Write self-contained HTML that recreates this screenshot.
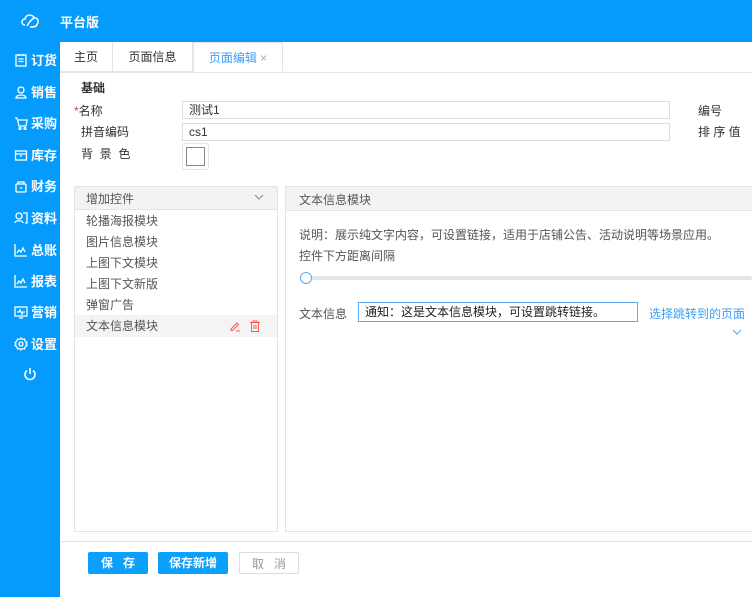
<!DOCTYPE html>
<html><head><meta charset="utf-8"><style>
*{margin:0;padding:0;box-sizing:border-box}
body{width:752px;height:597px;overflow:hidden;background:#fff;font-family:"Liberation Sans","Noto Sans CJK SC",sans-serif;font-size:12px;color:#333;position:relative}
.a{position:absolute;white-space:nowrap}
.top{left:0;top:0;width:752px;height:42px;background:#049bfd}
.side{left:0;top:42px;width:60px;height:555px;background:#049bfd}
.si{position:absolute;left:14px;color:#fff;font-size:13px;font-weight:bold;display:flex;align-items:center;gap:3px;white-space:nowrap}
.si svg{width:14px;height:14px}
.tab{top:42px;height:30px;line-height:30px;text-align:center;font-size:12px;border-right:1px solid #e4e4e4;border-bottom:1px solid #e4e4e4}
.inp{border:1px solid #ddd;height:18px;padding-left:6px;line-height:16px;font-size:12px}
.li{position:absolute;left:12px;font-size:12px;color:#555;white-space:nowrap}
.btn{top:552px;height:22px;line-height:22px;text-align:center;font-size:12px;border-radius:2px;font-weight:bold}
</style></head><body>
<div class="a top"></div>
<svg class="a" style="left:19px;top:11px" width="22" height="20" viewBox="0 0 22 20" fill="none" stroke="#fff" stroke-width="1.5"><path d="M6 14c-4 0-4-6 0-6 1-5 8-5 9-1 4-1 6 5 2 7"/><path d="M8 15c2-4 4-6 7-8"/><path d="M11 16c3 0 6 0 7-2"/></svg>
<div class="a" style="left:60px;top:12px;color:#fff;font-size:13px;font-weight:bold">平台版</div>
<div class="a side"></div>
<div class="si" style="top:50px"><svg viewBox="0 0 14 14" fill="none" stroke="#fff" stroke-width="1.3"><rect x="2" y="2" width="10" height="11"/><path d="M5 1v2M9 1v2M4.5 6h5M4.5 8.5h5"/></svg>订货</div>
<div class="si" style="top:82px"><svg viewBox="0 0 14 14" fill="none" stroke="#fff" stroke-width="1.3"><circle cx="7" cy="5" r="3"/><path d="M2 13c0-4 10-4 10 0z"/></svg>销售</div>
<div class="si" style="top:113px"><svg viewBox="0 0 14 14" fill="none" stroke="#fff" stroke-width="1.3"><path d="M1 2h2l2 8h7l1-6H4"/><circle cx="6" cy="12.5" r="1"/><circle cx="11" cy="12.5" r="1"/></svg>采购</div>
<div class="si" style="top:145px"><svg viewBox="0 0 14 14" fill="none" stroke="#fff" stroke-width="1.3"><rect x="1.5" y="3" width="11" height="9"/><path d="M1.5 6h11M6 8h2"/></svg>库存</div>
<div class="si" style="top:176px"><svg viewBox="0 0 14 14" fill="none" stroke="#fff" stroke-width="1.3"><rect x="2" y="5" width="10" height="8" rx="1"/><path d="M4 5V3h6v2M7 8v2"/></svg>财务</div>
<div class="si" style="top:208px"><svg viewBox="0 0 14 14" fill="none" stroke="#fff" stroke-width="1.3"><circle cx="5" cy="5" r="3"/><path d="M1 12c0-3 8-3 8 0M9 2h4v10h-2"/></svg>资料</div>
<div class="si" style="top:240px"><svg viewBox="0 0 14 14" fill="none" stroke="#fff" stroke-width="1.3"><path d="M1 1v12h12M3 10l2-3 2 2 2-4 2 4"/></svg>总账</div>
<div class="si" style="top:271px"><svg viewBox="0 0 14 14" fill="none" stroke="#fff" stroke-width="1.3"><path d="M1 1v12h12M3 10l2-3 2 2 2-4 2 4"/></svg>报表</div>
<div class="si" style="top:302px"><svg viewBox="0 0 14 14" fill="none" stroke="#fff" stroke-width="1.3"><rect x="1" y="2" width="12" height="9"/><path d="M3 7h2l1-2 2 4 1-2h2M5 13h4"/></svg>营销</div>
<div class="si" style="top:334px"><svg viewBox="0 0 14 14" fill="none" stroke="#fff" stroke-width="1.3"><circle cx="7" cy="7" r="2"/><path d="M7 1l1.5 1.5 2-.5.5 2L13 5.5 12 7l1 1.5-2 1.5-.5 2-2-.5L7 13l-1.5-1.5-2 .5-.5-2L1 8.5 2 7 1 5.5 3 4l.5-2 2 .5z"/></svg>设置</div>
<svg class="a" style="left:23px;top:367px" width="14" height="14" viewBox="0 0 14 14" fill="none" stroke="#fff" stroke-width="1.6"><path d="M4 3.5a5 5 0 1 0 6 0M7 1v6"/></svg>

<div class="a" style="left:60px;top:72px;width:692px;border-top:1px solid #e4e4e4"></div>
<div class="a tab" style="left:60px;width:53px">主页</div>
<div class="a tab" style="left:113px;width:80px">页面信息</div>
<div class="a tab" style="left:193px;width:90px;color:#3d9df5;border-bottom:1px solid #fff;border-left:1px solid #e4e4e4;border-top:1px solid #e4e4e4;">页面编辑 <span style="color:#aaa">×</span></div>

<div class="a" style="left:81px;top:79px;font-weight:bold">基础</div>
<div class="a" style="left:74px;top:102px"><span style="color:#e33">*</span>名称</div>
<div class="a" style="left:81px;top:123px">拼音编码</div>
<div class="a" style="left:81px;top:145px">背&nbsp;&nbsp;景&nbsp;&nbsp;色</div>
<div class="a inp" style="left:182px;top:101px;width:488px">测试1</div>
<div class="a inp" style="left:182px;top:123px;width:488px">cs1</div>
<div class="a" style="left:182px;top:143px;width:27px;height:27px;border:1px solid #e4e4e4;border-radius:3px;padding:3px"><div style="width:19px;height:19px;border:1px solid #888"></div></div>
<div class="a" style="left:698px;top:102px">编号</div>
<div class="a" style="left:698px;top:123px">排&nbsp;序&nbsp;值</div>

<div class="a" style="left:74px;top:186px;width:204px;height:346px;border:1px solid #e4e4e4"></div>
<div class="a" style="left:75px;top:187px;width:202px;height:23px;background:#f3f3f3;border-bottom:1px solid #e4e4e4"></div>
<div class="a" style="left:86px;top:190px;color:#555">增加控件</div>
<svg class="a" style="left:254px;top:194px" width="10" height="6" viewBox="0 0 10 6" fill="none" stroke="#888"><path d="M1 1l4 4 4-4"/></svg>
<div class="a" style="left:75px;top:315px;width:202px;height:22px;background:#f4f4f4"></div>
<div class="li" style="left:86px;top:212px">轮播海报模块</div>
<div class="li" style="left:86px;top:233px">图片信息模块</div>
<div class="li" style="left:86px;top:254px">上图下文模块</div>
<div class="li" style="left:86px;top:275px">上图下文新版</div>
<div class="li" style="left:86px;top:296px">弹窗广告</div>
<div class="li" style="left:86px;top:317px">文本信息模块</div>
<svg class="a" style="left:229px;top:320px" width="12" height="12" viewBox="0 0 12 12" fill="none" stroke="#f55"><path d="M2 9l6-6 1.5 1.5-6 6H2zM7 11h4"/></svg>
<svg class="a" style="left:249px;top:320px" width="12" height="12" viewBox="0 0 12 12" fill="none" stroke="#f55"><path d="M1 2.5h10M4 2.5V1h4v1.5M2.5 2.5v9h7v-9M5 5v4M7 5v4"/></svg>

<div class="a" style="left:285px;top:186px;width:470px;height:346px;border:1px solid #e4e4e4"></div>
<div class="a" style="left:286px;top:187px;width:466px;height:24px;background:#f3f3f3;border-bottom:1px solid #e4e4e4"></div>
<div class="a" style="left:299px;top:191px;color:#555">文本信息模块</div>
<div class="a" style="left:299px;top:226px;color:#555">说明：展示纯文字内容，可设置链接，适用于店铺公告、活动说明等场景应用。</div>
<div class="a" style="left:299px;top:247px;color:#555">控件下方距离间隔</div>
<div class="a" style="left:300px;top:276px;width:452px;height:4px;background:#e3e5ec;border-radius:2px"></div>
<div class="a" style="left:300px;top:272px;width:12px;height:12px;border:1.5px solid #5aa9f2;border-radius:50%;background:#fff"></div>
<div class="a" style="left:299px;top:305px;color:#555">文本信息</div>
<div class="a inp" style="left:358px;top:302px;width:280px;height:20px;border-color:#5aa9f2;color:#222;line-height:18px">通知：这是文本信息模块，可设置跳转链接。</div>
<div class="a" style="left:649px;top:305px;color:#3d9df5">选择跳转到的页面</div>
<svg class="a" style="left:732px;top:329px" width="10" height="6" viewBox="0 0 10 6" fill="none" stroke="#5aa9f2"><path d="M1 1l4 4 4-4"/></svg>

<div class="a" style="left:60px;top:541px;width:692px;border-top:1px solid #e4e4e4"></div>
<div class="a btn" style="left:88px;width:60px;background:#0aa0fc;color:#fff">保&nbsp;&nbsp;&nbsp;存</div>
<div class="a btn" style="left:158px;width:70px;background:#0aa0fc;color:#fff">保存新增</div>
<div class="a btn" style="left:239px;width:60px;border:1px solid #ddd;color:#999;font-weight:normal">取&nbsp;&nbsp;&nbsp;消</div>
</body></html>
